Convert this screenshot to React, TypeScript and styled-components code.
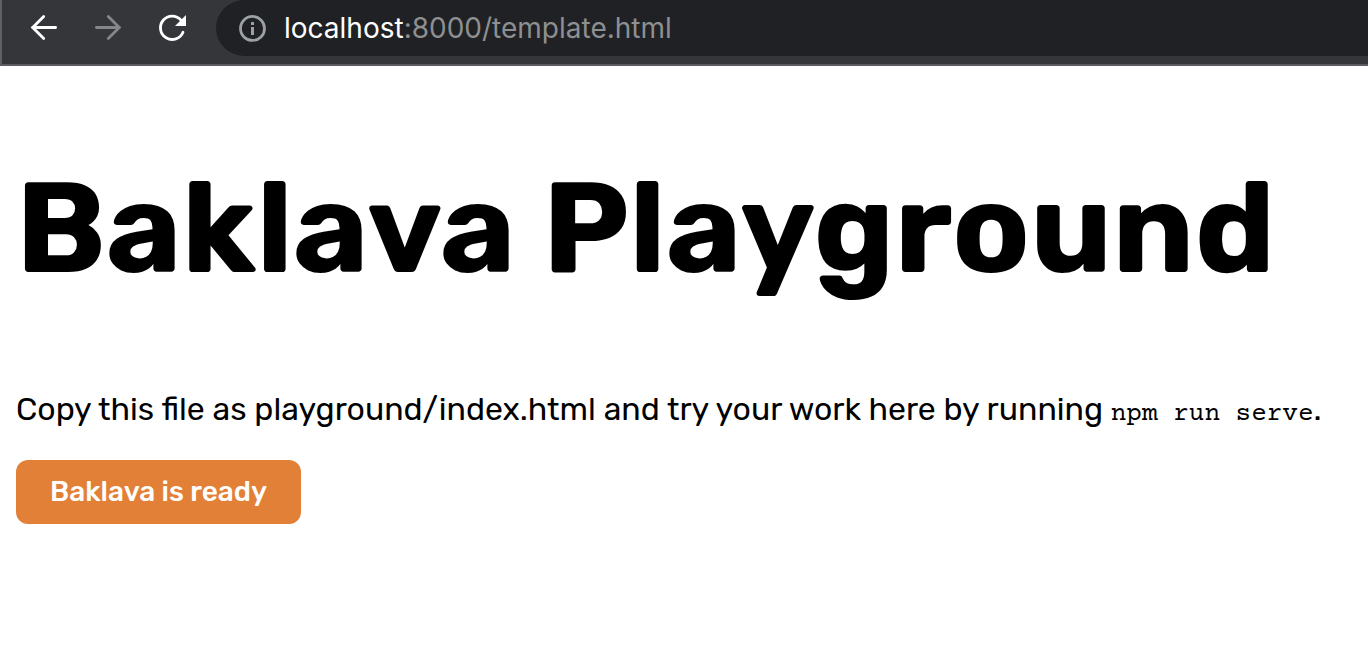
import React from "react";
import styled, { createGlobalStyle } from "styled-components";

const GlobalStyle = createGlobalStyle`
  *, *::before, *::after { box-sizing: border-box; }
  body {
    margin: 0;
    background: #fff;
    color: #000;
    font-family: Rubik, Roboto, "Liberation Sans", sans-serif;
  }
`;

const Toolbar = styled.header`
  display: flex;
  align-items: flex-start;
  gap: 24px;
  padding: 0 0 8px 22px;
  background: #35363a;
  border-left: 2px solid #5f6064;
  border-bottom: 2px solid #5c5b5f;
`;

const Nav = styled.nav`
  display: flex;
  gap: 24px;
`;

const NavButton = styled.button`
  display: flex;
  align-items: center;
  justify-content: center;
  width: 40px;
  height: 56px;
  padding: 0;
  border: 0;
  background: none;
  color: #fff;

  &:disabled { color: #85868a; }
`;

const AddressBar = styled.div`
  display: flex;
  flex: 1;
  align-items: center;
  gap: 16px;
  min-width: 0;
  height: 56px;
  padding-left: 20px;
  border-radius: 28px 0 0 28px;
  background: #202124;
  color: #9aa0a3;
`;

const Address = styled.a`
  color: #8e8f91;
  font-family: Inter, Roboto, sans-serif;
  font-size: 28px;
  line-height: 40px;
  text-decoration: none;
  white-space: nowrap;
`;

const Host = styled.span`
  color: #fff;
`;

const Page = styled.main`
  padding: 86px 16px 16px;
`;

const Title = styled.h1`
  margin: 0;
  font-size: 128px;
  font-weight: 700;
  line-height: 152px;
`;

const Intro = styled.p`
  margin: 86px 0 26px;
  font-size: 32px;
  line-height: 38px;
`;

const Code = styled.code`
  font-family: "Courier Prime", Courier, "Liberation Mono", monospace;
  font-size: 26px;
`;

const ReadyButton = styled.button`
  display: block;
  height: 64px;
  padding: 0 34px;
  border: 0;
  border-radius: 12px;
  background: #e38037;
  color: #fff;
  font: 500 28px/32px Rubik, Roboto, "Liberation Sans", sans-serif;
`;

const ArrowIcon = ({ forward = false }: { forward?: boolean }) => (
  <svg width="40" height="40" viewBox="0 0 40 40" fill="none" stroke="currentColor" strokeWidth="2.8" strokeLinecap="round" aria-hidden="true">
    <path d={forward ? "M8.4 19.5H31.5M20.3 8.5L31.3 19.5L20.3 30.5" : "M31.6 19.5H8.5M19.7 8.5L8.7 19.5L19.7 30.5"} />
  </svg>
);

const ReloadIcon = () => (
  <svg width="40" height="40" viewBox="0 0 40 40" fill="none" aria-hidden="true">
    <path d="M31 24.2A11.7 11.7 0 1 1 29 12.1" stroke="currentColor" strokeWidth="2.8" strokeLinecap="round" />
    <path d="M34 7V18H23Z" fill="currentColor" />
  </svg>
);

const InfoIcon = () => (
  <svg width="32" height="32" viewBox="0 0 32 32" fill="none" aria-hidden="true">
    <circle cx="16.5" cy="16.4" r="12" stroke="currentColor" strokeWidth="2.8" />
    <path d="M15 10h3v3h-3zM15 15h3v8h-3z" fill="currentColor" />
  </svg>
);

export default function App() {
  return (
    <>
      <GlobalStyle />
      <Toolbar>
        <Nav aria-label="Browser navigation">
          <NavButton type="button" aria-label="Back"><ArrowIcon /></NavButton>
          <NavButton type="button" aria-label="Forward" disabled><ArrowIcon forward /></NavButton>
          <NavButton type="button" aria-label="Reload"><ReloadIcon /></NavButton>
        </Nav>
        <AddressBar>
          <InfoIcon />
          <Address href="http://localhost:8000/template.html"><Host>localhost</Host>:8000/template.html</Address>
        </AddressBar>
      </Toolbar>
      <Page>
        <Title>Baklava Playground</Title>
        <Intro>Copy this file as playground/index.html and try your work here by running <Code>npm run serve</Code>.</Intro>
        <ReadyButton type="button">Baklava is ready</ReadyButton>
      </Page>
    </>
  );
}
